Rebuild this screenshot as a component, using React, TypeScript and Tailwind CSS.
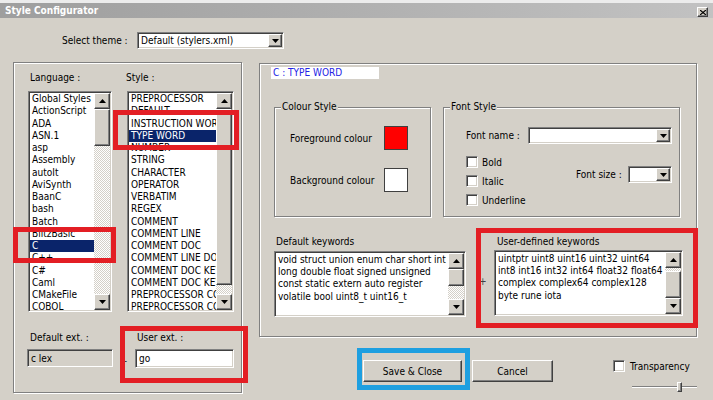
import React from "react";

const SUNKEN =
  "border border-t-[#808080] border-l-[#808080] border-b-white border-r-white shadow-[inset_1px_1px_0_#404040,inset_-1px_-1px_0_#d4d0c8] p-px";
const RAISED =
  "bg-[#d4d0c8] border border-t-white border-l-white border-b-[#404040] border-r-[#404040] shadow-[inset_-1px_-1px_0_#808080,inset_1px_1px_0_#d4d0c8]";
const ETCHED = "border border-[#808080] shadow-[1px_1px_0_#ffffff,inset_1px_1px_0_#ffffff]";
const HATCH =
  "bg-[repeating-conic-gradient(#d4d0c8_0%_25%,#ffffff_0%_50%)] bg-[length:2px_2px]";

function Arrow({ dir, cls }: { dir: "up" | "down"; cls: string }) {
  return (
    <div className={`${cls} shrink-0 ${RAISED} flex items-center justify-center`}>
      <svg width="7" height="4" viewBox="0 0 7 4">
        {dir === "up" ? (
          <path d="M3.5 0 L7 4 L0 4 Z" fill="#000" />
        ) : (
          <path d="M0 0 L7 0 L3.5 4 Z" fill="#000" />
        )}
      </svg>
    </div>
  );
}

function VScroll({ thumbCls, trackCls = "" }: { thumbCls: string; trackCls?: string }) {
  return (
    <div className="w-[16px] h-full flex flex-col shrink-0">
      <Arrow dir="up" cls="w-[16px] h-[16px]" />
      <div className={`flex-1 flex flex-col ${HATCH} ${trackCls}`}>
        <div className={`${thumbCls} w-full ${RAISED}`} />
      </div>
      <Arrow dir="down" cls="w-[16px] h-[16px]" />
    </div>
  );
}

function ListBox({
  items,
  selected,
  cls,
  thumbCls,
}: {
  items: string[];
  selected: number;
  cls: string;
  thumbCls: string;
}) {
  return (
    <div className={`${cls} h-[221px] bg-white ${SUNKEN} flex`}>
      <div className="flex-1 min-w-0 overflow-hidden">
        {items.map((it, i) => (
          <div
            key={it}
            className={`h-[12.25px] leading-[12.25px] pl-[2px] whitespace-nowrap overflow-hidden ${
              i === selected ? "bg-[#0a246a] text-white" : ""
            }`}
          >
            {it}
          </div>
        ))}
      </div>
      <VScroll thumbCls={thumbCls} />
    </div>
  );
}

function Combo({ cls, value }: { cls: string; value: string }) {
  return (
    <div className={`${cls} bg-white ${SUNKEN} flex`}>
      <div className="flex-1 pl-[2px] flex items-center whitespace-nowrap overflow-hidden">{value}</div>
      <Arrow dir="down" cls="w-[14px] h-full" />
    </div>
  );
}

function Check({ label }: { label: string }) {
  return (
    <div className="flex items-center h-[12px]">
      <div className={`w-[12px] h-[12px] bg-white ${SUNKEN}`} />
      <span className="ml-[4px]">{label}</span>
    </div>
  );
}

function KeywordBox({
  lines,
  cls,
  thumbCls,
  trackCls,
}: {
  lines: string[];
  cls: string;
  thumbCls: string;
  trackCls?: string;
}) {
  return (
    <div className={`${cls} h-[66px] bg-white ${SUNKEN} flex`}>
      <div className="flex-1 pl-[2px] pt-px overflow-hidden">
        {lines.map((l) => (
          <div key={l} className="h-[12.2px] leading-[12.2px] whitespace-nowrap">
            {l}
          </div>
        ))}
      </div>
      <VScroll thumbCls={thumbCls} trackCls={trackCls} />
    </div>
  );
}

const LANGS = [
  "Global Styles",
  "ActionScript",
  "ADA",
  "ASN.1",
  "asp",
  "Assembly",
  "autoIt",
  "AviSynth",
  "BaanC",
  "bash",
  "Batch",
  "BlitzBasic",
  "C",
  "C++",
  "C#",
  "Caml",
  "CMakeFile",
  "COBOL",
];

const STYLES = [
  "PREPROCESSOR",
  "DEFAULT",
  "INSTRUCTION WORD",
  "TYPE WORD",
  "NUMBER",
  "STRING",
  "CHARACTER",
  "OPERATOR",
  "VERBATIM",
  "REGEX",
  "COMMENT",
  "COMMENT LINE",
  "COMMENT DOC",
  "COMMENT LINE DOC",
  "COMMENT DOC KEYWORD",
  "COMMENT DOC KEYWORD ERROR",
  "PREPROCESSOR COMMENT",
  "PREPROCESSOR COMMENT DOC",
];

export default function App() {
  return (
    <div className="font-['DejaVu_Sans_Condensed','Liberation_Sans',sans-serif] w-[713px] h-[400px] bg-[#d4d0c8] text-[10px] text-black relative overflow-hidden flex flex-col">
      <div className="h-[3px] bg-[#ececec] shrink-0" />
      <div className="h-[15px] shrink-0 bg-gradient-to-r from-[#9e9e9e] to-[#c2c2c2] flex items-center justify-between pl-[5px] pr-[5px]">
        <span className="text-white font-bold text-[10px] leading-[15px]">Style Configurator</span>
        <div className={`w-[11px] h-[10px] mt-[3px] ${RAISED} flex items-center justify-center`}>
          <svg width="6" height="5" viewBox="0 0 6 5">
            <path d="M0 0 L6 5 M6 0 L0 5" stroke="#000" strokeWidth="1.2" />
          </svg>
        </div>
      </div>

      {/* theme row */}
      <div className="mt-[14px] h-[17px] flex items-center shrink-0">
        <span className="ml-[62px] w-[75px]">Select theme :</span>
        <Combo cls="w-[147px] h-[17px]" value="Default (stylers.xml)" />
      </div>

      {/* main */}
      <div className="mt-[13px] flex">
        {/* left group */}
        <div className={`ml-[13px] w-[229px] h-[331px] ${ETCHED} pt-[9px] pl-[14px] flex flex-col`}>
          <div className="flex gap-[15px]">
            <div className="flex flex-col">
              <div className="h-[12px] leading-[12px] pl-[2px]">Language :</div>
              <ListBox items={LANGS} selected={12} cls="mt-[7px] w-[84px]" thumbCls="h-[37px]" />
            </div>
            <div className="flex flex-col">
              <div className="h-[12px] leading-[12px] -ml-px">Style :</div>
              <ListBox items={STYLES} selected={3} cls="mt-[7px] w-[107px]" thumbCls="h-[176px]" />
            </div>
          </div>
          <div className="mt-[20px] flex">
            <div className="flex flex-col w-[86px] -ml-px">
              <div className="h-[12px] leading-[12px] pl-[3px]">Default ext. :</div>
              <div className={`mt-[5px] h-[18px] ${SUNKEN} pl-[3px] flex items-center`}>c lex</div>
            </div>
            <div className="w-[22px] pt-[22px] pl-[7px] text-[#404040]">+</div>
            <div className="flex flex-col">
              <div className="h-[12px] leading-[12px] pl-[2px]">User ext. :</div>
              <div className={`mt-[5px] w-[99px] h-[19px] bg-white ${SUNKEN} pl-[3px] flex items-center`}>go</div>
            </div>
          </div>
        </div>

        {/* right column */}
        <div className="ml-[17px] w-[438px] flex flex-col">
          <div className={`mt-px h-[274px] ${ETCHED} flex flex-col`}>
            <div className="ml-[11px] mt-[3px] w-[108px] h-[12px] bg-white text-[#2323e6] leading-[12px] pl-[2px]">
              C : TYPE WORD
            </div>
            <div className="mt-[28px] flex">
              {/* colour style */}
              <div className={`relative ml-[14px] w-[157px] h-[110px] ${ETCHED} pt-[18px] pl-[15px] flex flex-col gap-[18px]`}>
                <span className="absolute -top-[7px] left-[6px] px-px bg-[#d4d0c8] leading-[12px]">Colour Style</span>
                <div className="flex items-center h-[24px]">
                  <span className="w-[94px]">Foreground colour</span>
                  <div className="w-[24px] h-[24px] bg-[#ff0000] border border-[#404040]" />
                </div>
                <div className="flex items-center h-[24px]">
                  <span className="w-[94px]">Background colour</span>
                  <div className="w-[24px] h-[24px] bg-white border border-[#404040]" />
                </div>
              </div>
              {/* font style */}
              <div className={`relative ml-[12px] w-[237px] h-[110px] ${ETCHED} pt-[19px] pl-[22px] flex flex-col`}>
                <span className="absolute -top-[7px] left-[6px] px-px bg-[#d4d0c8] leading-[12px]">Font Style</span>
                <div className="flex items-center h-[17px]">
                  <span className="w-[62px]">Font name :</span>
                  <Combo cls="w-[144px] h-[17px]" value="" />
                </div>
                <div className="mt-[12px] flex">
                  <div className="w-[110px] flex flex-col gap-[7px]">
                    <Check label="Bold" />
                    <Check label="Italic" />
                    <Check label="Underline" />
                  </div>
                  <div className="mt-[10px] flex items-center h-[17px]">
                    <span className="w-[52px]">Font size :</span>
                    <Combo cls="w-[44px] h-[17px]" value="" />
                  </div>
                </div>
              </div>
            </div>
            {/* keywords */}
            <div className="mt-[19px] flex">
              <div className="ml-[14px] flex flex-col">
                <div className="h-[12px] leading-[12px] pl-[2px]">Default keywords</div>
                <KeywordBox
                  cls="mt-[3px] w-[192px]"
                  thumbCls="h-[17px]"
                  lines={[
                    "void struct union enum char short int",
                    "long double float signed unsigned",
                    "const static extern auto register",
                    "volatile bool uint8_t uint16_t",
                  ]}
                />
              </div>
              <div className="w-[28px] pl-[13px] pt-[38px] text-[#404040]">+</div>
              <div className="flex flex-col">
                <div className="h-[12px] leading-[12px] pl-[3px]">User-defined keywords</div>
                <KeywordBox
                  cls="mt-[2px] w-[189px]"
                  thumbCls="h-[27px]"
                  trackCls="justify-end"
                  lines={[
                    "uintptr uint8 uint16 uint32 uint64",
                    "int8 int16 int32 int64 float32 float64",
                    "complex complex64 complex128",
                    "byte rune iota",
                  ]}
                />
              </div>
            </div>
          </div>

          {/* buttons */}
          <div className="mt-[23px] flex items-start">
            <div className={`ml-[104px] w-[99px] h-[22px] ${RAISED} flex items-center justify-center`}>Save &amp; Close</div>
            <div className={`ml-[10px] w-[81px] h-[22px] ${RAISED} flex items-center justify-center`}>Cancel</div>
            <div className="ml-[60px] flex flex-col">
              <div className="flex items-center h-[12px]">
                <div className={`w-[12px] h-[12px] bg-white ${SUNKEN}`} />
                <span className="ml-[5px]">Transparency</span>
              </div>
              <div className="relative mt-[10px] ml-[19px] w-[65px] h-[10px] flex items-center">
                <div className="w-full h-[2px] border-t border-t-[#808080] border-b border-b-white" />
                <div className={`absolute left-[45px] top-0 w-[5px] h-[10px] ${RAISED}`} />
              </div>
            </div>
          </div>
        </div>
      </div>

      {/* annotation overlays */}
      <div className="absolute left-[113px] top-[110px] w-[126px] h-[40px] border-[5px] border-[#e31e24]" />
      <div className="absolute left-[13px] top-[227px] w-[103px] h-[36px] border-[5px] border-[#e31e24]" />
      <div className="absolute left-[120px] top-[326px] w-[128px] h-[57px] border-[5px] border-[#e31e24]" />
      <div className="absolute left-[476px] top-[228px] w-[222px] h-[100px] border-[5px] border-[#e31e24]" />
      <div className="absolute left-[357px] top-[348px] w-[113px] h-[42px] border-[5px] border-[#1e9fe0]" />
    </div>
  );
}
